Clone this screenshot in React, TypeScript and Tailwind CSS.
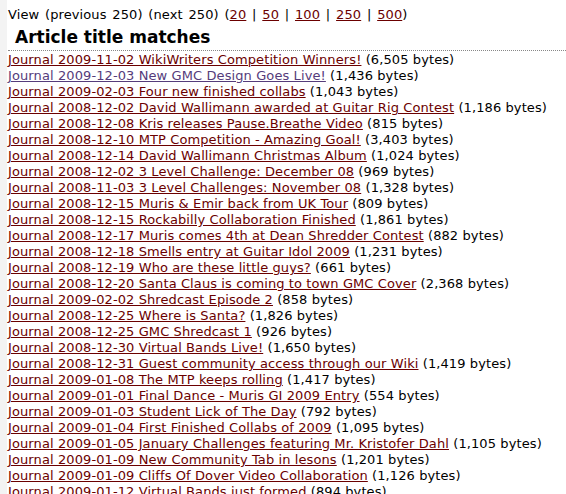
import React from "react";

const rows: [string, string, boolean?][] = [
  ["Journal 2009-11-02 WikiWriters Competition Winners!", "6,505"],
  ["Journal 2009-12-03 New GMC Design Goes Live!", "1,436", true],
  ["Journal 2009-02-03 Four new finished collabs", "1,043"],
  ["Journal 2008-12-02 David Wallimann awarded at Guitar Rig Contest", "1,186"],
  ["Journal 2008-12-08 Kris releases Pause.Breathe Video", "815"],
  ["Journal 2008-12-10 MTP Competition - Amazing Goal!", "3,403"],
  ["Journal 2008-12-14 David Wallimann Christmas Album", "1,024"],
  ["Journal 2008-12-02 3 Level Challenge: December 08", "969"],
  ["Journal 2008-11-03 3 Level Challenges: November 08", "1,328"],
  ["Journal 2008-12-15 Muris & Emir back from UK Tour", "809"],
  ["Journal 2008-12-15 Rockabilly Collaboration Finished", "1,861"],
  ["Journal 2008-12-17 Muris comes 4th at Dean Shredder Contest", "882"],
  ["Journal 2008-12-18 Smells entry at Guitar Idol 2009", "1,231"],
  ["Journal 2008-12-19 Who are these little guys?", "661"],
  ["Journal 2008-12-20 Santa Claus is coming to town GMC Cover", "2,368"],
  ["Journal 2009-02-02 Shredcast Episode 2", "858"],
  ["Journal 2008-12-25 Where is Santa?", "1,826"],
  ["Journal 2008-12-25 GMC Shredcast 1", "926"],
  ["Journal 2008-12-30 Virtual Bands Live!", "1,650"],
  ["Journal 2008-12-31 Guest community access through our Wiki", "1,419"],
  ["Journal 2009-01-08 The MTP keeps rolling", "1,417"],
  ["Journal 2009-01-01 Final Dance - Muris GI 2009 Entry", "554"],
  ["Journal 2009-01-03 Student Lick of The Day", "792"],
  ["Journal 2009-01-04 First Finished Collabs of 2009", "1,095"],
  ["Journal 2009-01-05 January Challenges featuring Mr. Kristofer Dahl", "1,105"],
  ["Journal 2009-01-09 New Community Tab in lesons", "1,201"],
  ["Journal 2009-01-09 Cliffs Of Dover Video Collaboration", "1,126"],
  ["Journal 2009-01-12 Virtual Bands just formed", "894"],
];

function PageLink({ children }: { children: React.ReactNode }) {
  return (
    <a href="#" className="text-[#6b0000] underline">
      {children}
    </a>
  );
}

export default function App() {
  return (
    <div className="flex h-[494px] overflow-hidden bg-white font-['DejaVu_Sans',Verdana,sans-serif] text-[13px] leading-[16px] tracking-[0.1px] text-black">
      <div className="w-[7px] shrink-0 bg-[#f3f3f3]"></div>
      <div className="flex-1 pl-[1px] pt-[7px]">
        <div className="whitespace-nowrap [word-spacing:1.5px]">
          View (previous 250) (next 250) (<PageLink>20</PageLink> |{" "}
          <PageLink>50</PageLink> | <PageLink>100</PageLink> |{" "}
          <PageLink>250</PageLink> | <PageLink>500</PageLink>)
        </div>
        <h2 className="mt-[3px] border-b border-dotted border-[#888] pb-[2px] pl-[7px] text-[17px] font-bold leading-[22px] tracking-normal">
          Article title matches
        </h2>
        <ul className="pt-[1px]">
          {rows.map(([title, size, visited]) => (
            <li key={title} className="whitespace-nowrap">
              <a
                href="#"
                className={
                  visited
                    ? "text-[#553c7b] underline"
                    : "text-[#6b0000] underline"
                }
              >
                {title}
              </a>{" "}
              ({size} bytes)
            </li>
          ))}
        </ul>
      </div>
    </div>
  );
}
